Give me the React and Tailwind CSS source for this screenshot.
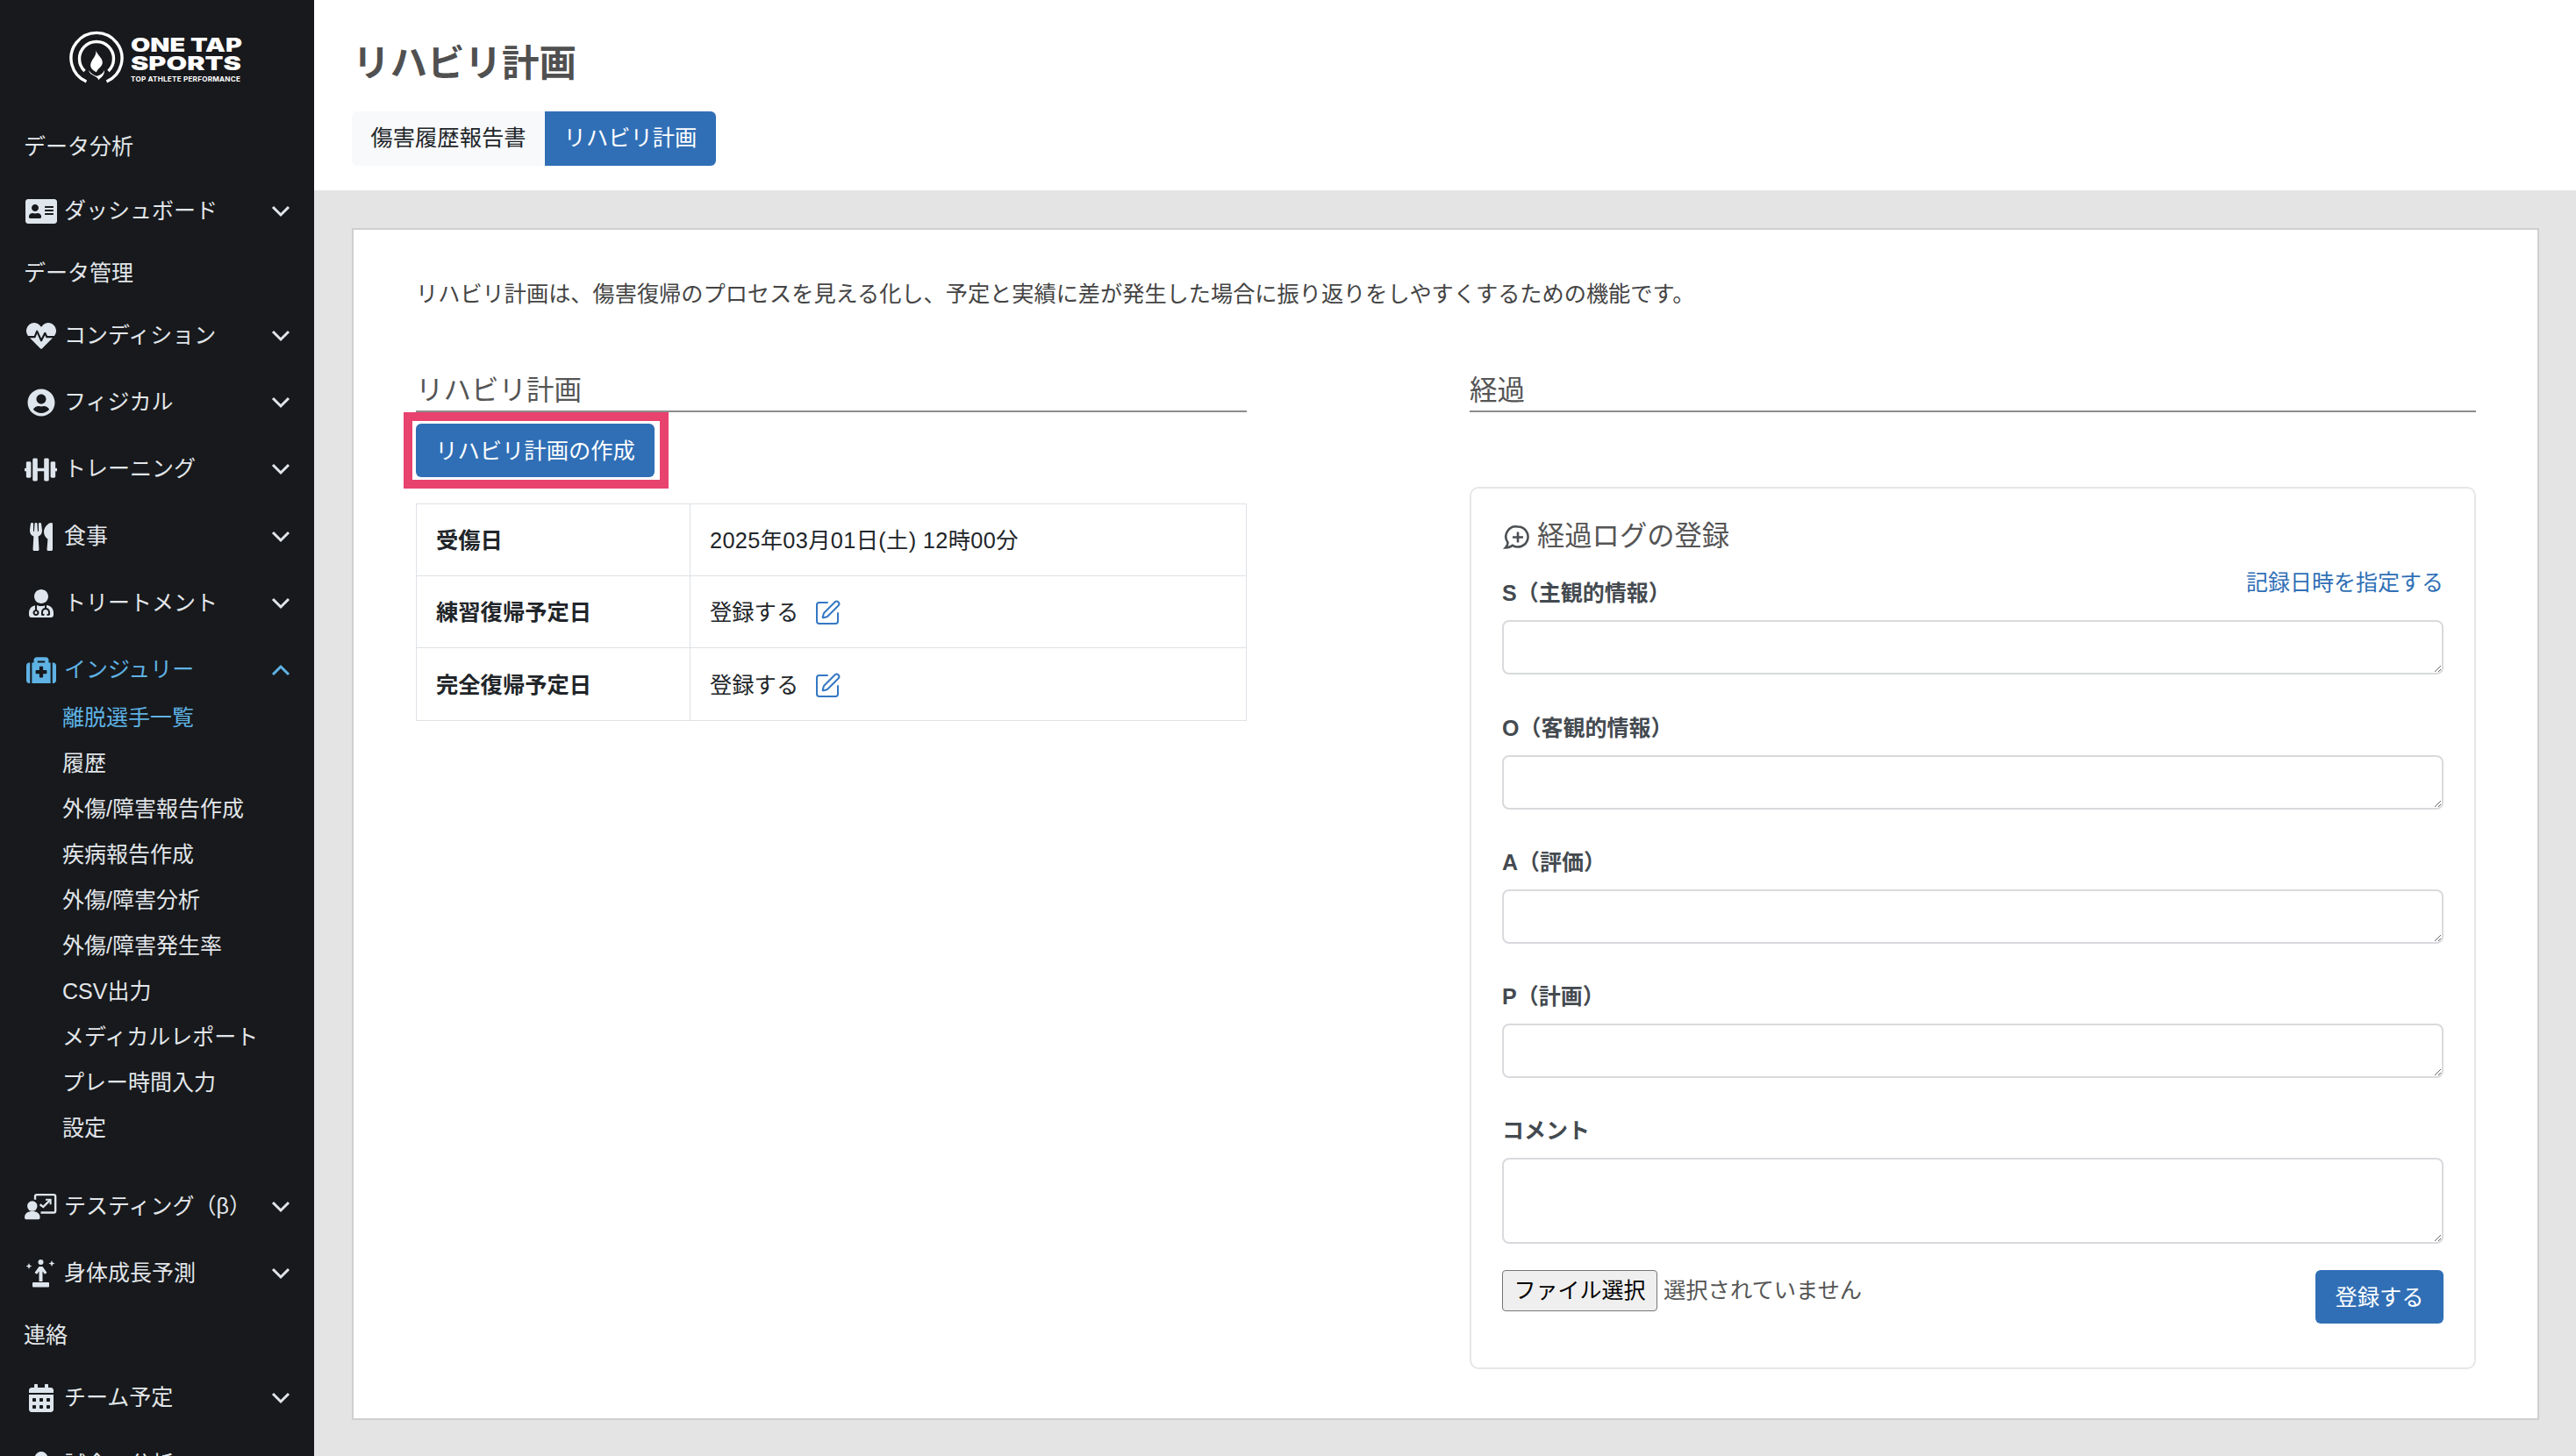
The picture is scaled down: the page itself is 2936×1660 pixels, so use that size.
import React from "react";
import { SquarePen } from "lucide-react";
import {
  FaAddressCard,
  FaHeartbeat,
  FaUserCircle,
  FaDumbbell,
  FaUtensils,
  FaUserMd,
  FaMedkit,
  FaCalendarAlt,
  FaUser,
} from "react-icons/fa";

function Chevron({ up }) {
  return (
    <svg width="22" height="14" viewBox="0 0 22 14" fill="none" className="ml-auto mr-[-1px]">
      <path d={up ? "M2 12l9-9 9 9" : "M2 2l9 9 9-9"} stroke="currentColor" strokeWidth="3" />
    </svg>
  );
}

function TestingIcon() {
  return (
    <svg width="40" height="32" viewBox="0 0 40 32" fill="none">
      <path d="M13 7V3a2 2 0 0 1 2-2h21a2 2 0 0 1 2 2v18a2 2 0 0 1-2 2H20" stroke="currentColor" strokeWidth="2.6" />
      <path d="M19 13l4 3 8-8" stroke="currentColor" strokeWidth="2.6" />
      <path d="M26 7h6v6" stroke="currentColor" strokeWidth="2.2" />
      <circle cx="9.5" cy="15" r="6.2" fill="currentColor" />
      <path d="M0 29c0-5 4-7.500 9.500-7.500S19 24 19 29c0 1.500-1 2.500-2.500 2.500h-14C1 31.500 0 30.500 0 29z" fill="currentColor" />
    </svg>
  );
}

function GrowthIcon() {
  return (
    <svg width="33" height="32" viewBox="0 0 33 32" fill="currentColor">
      <circle cx="16.500" cy="3" r="3" />
      <path d="M9.500 15L14.500 8h4l5 7-2.500 1.800-2.500-3.300V25h-4V13.500L12 16.800z" />
      <rect x="7" y="26" width="19" height="5.500" rx="1" />
      <path d="M3 4l1 2.500L6.500 7.500 4 8.500 3 11 2 8.500-.5 7.500 2 6.500z" />
      <path d="M29 1l1 2.500L32.500 4.500 30 5.500 29 8 28 5.500 25.500 4.500 28 3.500z" />
    </svg>
  );
}

function Logo() {
  return (
    <div className="h-[133px] pl-[79px] pt-[35px] flex items-start shrink-0">
      <svg width="62" height="62" viewBox="0 0 62 62" fill="none" className="shrink-0">
        <path d="M19.500 58A29 29 0 1 1 42.500 58" stroke="#fff" strokeWidth="3.400" />
        <path d="M17.500 46A19.500 19.500 0 1 1 44.500 46" stroke="#fff" strokeWidth="3.400" />
        <g transform="translate(-4 2) scale(1.13)">
          <path d="M30 18c2 5-4 9-5 14-.6 3.500 2 6 6 8 .5-3.500 6-5 6-10 0-4-5-7-7-12z" fill="#fff" />
          <path d="M23 38c1 5 6 5 9 8 1 1 .5 1.500 1 2 2-2.500 6-4 6-10-2 4-5 5.500-8 6-3-1-6-3-8-6z" fill="#fff" />
        </g>
      </svg>
      <div className="ml-[8px] mt-[6px] w-[130px] text-white font-['Inter',sans-serif]">
        <div className="font-black text-[22px] leading-[21px] whitespace-nowrap origin-left scale-x-[1.31]">ONE TAP</div>
        <div className="font-black text-[22px] leading-[21px] whitespace-nowrap origin-left scale-x-[1.39]">SPORTS</div>
        <div className="font-bold text-[8px] leading-[10px] whitespace-nowrap mt-[2px] origin-left scale-x-[1.02] tracking-[0.2px]">TOP ATHLETE PERFORMANCE</div>
      </div>
    </div>
  );
}

function Label({ children, className }) {
  return <div className={"flex items-center px-[27px] shrink-0 " + className}>{children}</div>;
}

function Group({ icon, children, active, up, className }) {
  return (
    <div className={"h-[76px] flex items-center pl-[28px] pr-[28px] shrink-0 " + (active ? "text-[#5fb2e4] " : "") + (className || "")}>
      <span className={"w-[37px] flex items-center justify-center shrink-0 " + (active ? "text-[#5fb2e4]" : "text-[#dee5ec]")}>{icon}</span>
      <span className="ml-[8px] whitespace-nowrap">{children}</span>
      <Chevron up={up} />
    </div>
  );
}

const subs = ["離脱選手一覧", "履歴", "外傷/障害報告作成", "疾病報告作成", "外傷/障害分析", "外傷/障害発生率", "CSV出力", "メディカルレポート", "プレー時間入力", "設定"];

function Sidebar() {
  return (
    <aside className="w-[358px] shrink-0 bg-[#17191c] text-[#e2e6ea] text-[25px] flex flex-col overflow-hidden h-[1660px]">
      <Logo />
      <Label className="h-[70px]">データ分析</Label>
      <Group icon={<FaAddressCard size={36} />}>ダッシュボード</Group>
      <Label className="h-[66px]">データ管理</Label>
      <Group icon={<FaHeartbeat size={34} />}>コンディション</Group>
      <Group icon={<FaUserCircle size={32} />}>フィジカル</Group>
      <Group icon={<FaDumbbell size={41} />} className="mb-px">トレーニング</Group>
      <Group icon={<FaUtensils size={32} />}>食事</Group>
      <Group icon={<FaUserMd size={32} />}>トリートメント</Group>
      <Group icon={<FaMedkit size={34} />} active up>インジュリー</Group>
      <div className="-mt-[9px] flex flex-col shrink-0">
        {subs.map((s, i) => (
          <div key={s} className={"h-[52px] pl-[71px] flex items-center whitespace-nowrap " + (i === 0 ? "text-[#5fb2e4]" : "")}>{s}</div>
        ))}
      </div>
      <Group icon={<TestingIcon />} className="mt-[25px]">テスティング（β）</Group>
      <Group icon={<GrowthIcon />}>身体成長予測</Group>
      <Label className="h-[66px]">連絡</Label>
      <Group icon={<FaCalendarAlt size={32} />}>チーム予定</Group>
      <Group icon={<FaUser size={30} />}>試合・分析</Group>
    </aside>
  );
}

function InfoRow({ label, children, last }) {
  return (
    <div className={"flex h-[82px] " + (last ? "" : "border-b border-[#dee2e6]")}>
      <div className="w-[312px] shrink-0 pl-[22px] pt-[3px] flex items-center font-bold text-[#212529] border-r border-[#dee2e6]">{label}</div>
      <div className="flex-1 pl-[22px] pt-[3px] flex items-center text-[#212529]">{children}</div>
    </div>
  );
}

function Register() {
  return (
    <span className="flex items-center">
      <span>登録する</span>
      <SquarePen size={32} strokeWidth={1.5} className="ml-[17px] text-[#3578c4]" />
    </span>
  );
}

function Field({ label, className, rowClass, children, big }) {
  return (
    <div className={className}>
      <div className={"flex justify-between " + (rowClass || "h-[40px]")}>
        <span className="self-end leading-[40px] pt-[2px] font-bold text-[#444a50] text-[25px]">{label}</span>
        {children}
      </div>
      <textarea className={"block w-full mt-[11px] border-2 border-[#d8dadd] rounded-[8px] bg-white " + (big ? "h-[98px]" : "h-[62px]")} />
    </div>
  );
}

function LeftColumn() {
  return (
    <section className="w-[947px] shrink-0">
      <h2 className="h-[49px] pt-[2px] text-[31.500px] leading-[44px] font-normal text-[#555] border-b-2 border-[#8c8c8c]">リハビリ計画</h2>
      <div className="mt-[13px] inline-block relative">
        <button className="block w-[272px] h-[61px] pt-[3px] bg-[#306fb6] text-white rounded-[6px] text-[25.300px]">リハビリ計画の作成</button>
        <span className="absolute left-[-14px] right-[-16px] top-[-13px] bottom-[-13px] border-[10px] border-[#e8426f] pointer-events-none" />
      </div>
      <div className="mt-[30px] border border-[#dee2e6] text-[25.300px]">
        <InfoRow label="受傷日"><span className="tracking-[0.35px]">2025年03月01日(土) 12時00分</span></InfoRow>
        <InfoRow label="練習復帰予定日"><Register /></InfoRow>
        <InfoRow label="完全復帰予定日" last><Register /></InfoRow>
      </div>
    </section>
  );
}

function RightColumn() {
  return (
    <section className="flex-1 min-w-0">
      <h2 className="h-[49px] pt-[2px] text-[31.500px] leading-[44px] font-normal text-[#555] border-b-2 border-[#8c8c8c]">経過</h2>
      <div className="mt-[85px] border-2 border-[#e6e6e6] rounded-[10px] px-[35px] pt-[31px] pb-[50px]">
        <div className="flex items-center h-[44px] pt-[4px] text-[31.300px] font-normal text-[#555]">
          <svg width="33" height="28" viewBox="0 0 31 28" fill="none" className="shrink-0 mr-[7px]">
            <path d="M17 2.500a11.500 11.500 0 1 1-6 21.300c-2 1.700-5 2.700-8 2.700 1.500-1.500 2.500-3.500 2.500-6A11.500 11.500 0 0 1 17 2.500z" stroke="#4a4f54" strokeWidth="2.600" />
            <path d="M17 8.500v12M11 14.500h12" stroke="#4a4f54" strokeWidth="2.600" />
          </svg>
          経過ログの登録
        </div>
        <Field label="S（主観的情報）" className="mt-[10px]" rowClass="h-[54px]">
          <a className="self-start leading-[40px] pt-[2px] text-[#306fb6] text-[25px]">記録日時を指定する</a>
        </Field>
        <Field label="O（客観的情報）" className="mt-[41px]" />
        <Field label="A（評価）" className="mt-[40px]" />
        <Field label="P（計画）" className="mt-[40px]" />
        <Field label="コメント" className="mt-[40px]" big />
        <div className="mt-[30px] flex justify-between items-start">
          <div className="flex items-center">
            <button className="w-[177px] h-[47px] bg-[#efefef] border-[1.500px] border-[#767676] rounded-[4px] text-[25px] text-black">ファイル選択</button>
            <span className="ml-[7px] text-[25.300px] text-[#555]">選択されていません</span>
          </div>
          <button className="w-[146px] h-[61px] pt-[3px] bg-[#306fb6] text-white rounded-[6px] text-[25.300px]">登録する</button>
        </div>
      </div>
    </section>
  );
}

export default function App() {
  return (
    <div className="w-[2936px] h-[1660px] overflow-hidden flex font-['Liberation_Sans','Noto_Sans_CJK_JP',sans-serif]">
      <Sidebar />
      <main className="flex-1 min-w-0 h-[1660px] bg-[#e4e4e4] overflow-hidden">
        <header className="h-[217px] bg-white pl-[44px] pt-[47px]">
          <h1 className="text-[42.500px] leading-[52px] font-bold text-[#505050]">リハビリ計画</h1>
          <div className="mt-[28px] -ml-[1px] flex text-[25.300px]">
            <span className="w-[220px] h-[62px] flex items-center justify-center bg-[#f8f9fa] text-[#212529] rounded-l-[6px]">傷害履歴報告書</span>
            <span className="w-[195px] h-[62px] flex items-center justify-center bg-[#306fb6] text-white rounded-r-[6px]">リハビリ計画</span>
          </div>
        </header>
        <div className="pl-[43px] pr-[42px] pt-[43px]">
          <div className="bg-white border-2 border-[#cfcfcf] pl-[71px] pr-[70px] pt-[53px] pb-[56px]">
            <p className="h-[40px] leading-[40px] text-[25.200px] text-[#444] whitespace-nowrap">リハビリ計画は、傷害復帰のプロセスを見える化し、予定と実績に差が発生した場合に振り返りをしやすくするための機能です。</p>
            <div className="mt-[66px] flex justify-between">
              <LeftColumn />
              <div className="w-[254px] shrink-0" />
              <RightColumn />
            </div>
          </div>
        </div>
      </main>
    </div>
  );
}
